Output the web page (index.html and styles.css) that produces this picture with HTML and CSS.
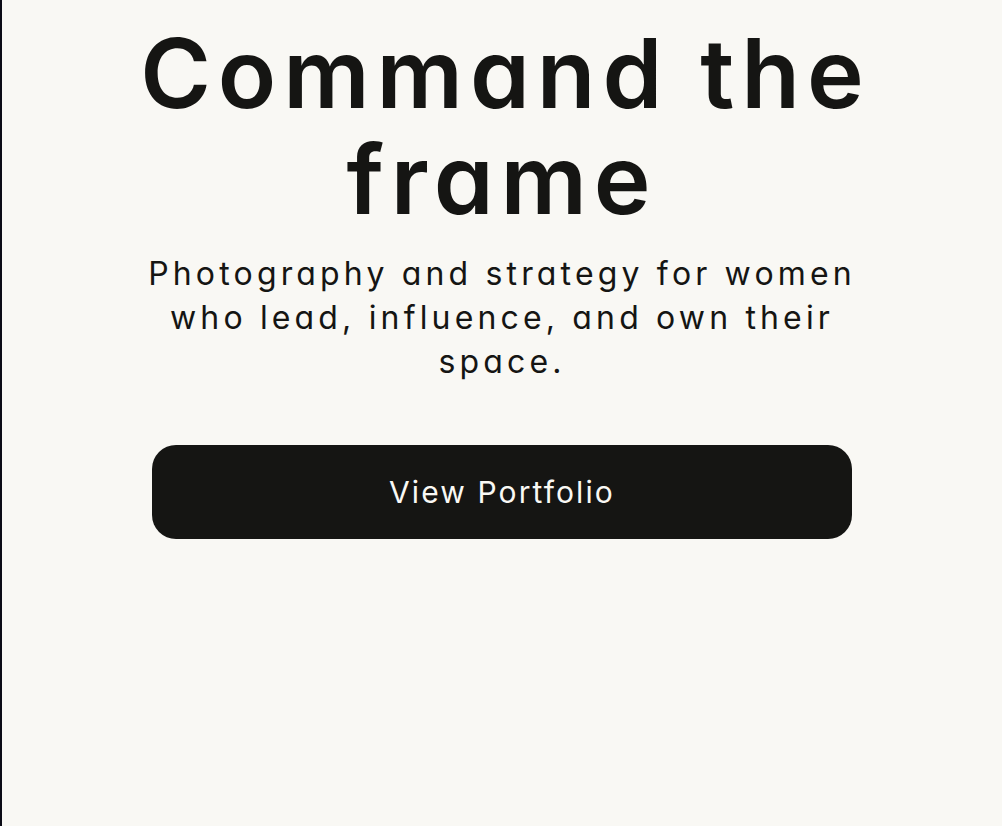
FILE: index.html
```html
<!DOCTYPE html>
<html lang="en">
<head>
<meta charset="utf-8">
<title>Command the frame</title>
<link rel="stylesheet" href="styles.css">
</head>
<body>
<main class="hero">
  <h1 class="hero-title">Command the frame</h1>
  <p class="hero-sub">Photography and strategy for women who lead, influence, and own their space.</p>
  <a class="hero-btn" href="#">View Portfolio</a>
</main>
</body>
</html>
```

FILE: styles.css
```css
html, body {
  margin: 0;
  padding: 0;
  height: 100%;
}
body {
  background: #f9f8f4;
  border-left: 2px solid #0b0b16;
  box-sizing: border-box;
  font-family: "Inter", "Liberation Sans", sans-serif;
  font-feature-settings: "cv11" 1;
  color: #151513;
}
.hero {
  display: flex;
  flex-direction: column;
  align-items: center;
  padding-top: 20px;
}
.hero-title {
  margin: 0;
  width: 790px;
  text-align: center;
  font-size: 96px;
  line-height: 106px;
  font-weight: 600;
  letter-spacing: 0.072em;
  text-indent: 0.072em;
}
.hero-sub {
  margin: 20px 0 0;
  width: 760px;
  text-align: center;
  font-size: 32px;
  line-height: 44px;
  font-weight: 400;
  letter-spacing: 0.13em;
}
.hero-btn {
  margin-top: 61px;
  width: 700px;
  height: 94px;
  border-radius: 24px;
  background: #151513;
  color: #f9f8f4;
  display: flex;
  align-items: center;
  justify-content: center;
  text-decoration: none;
  font-size: 30px;
  letter-spacing: 0.07em;
}
```
